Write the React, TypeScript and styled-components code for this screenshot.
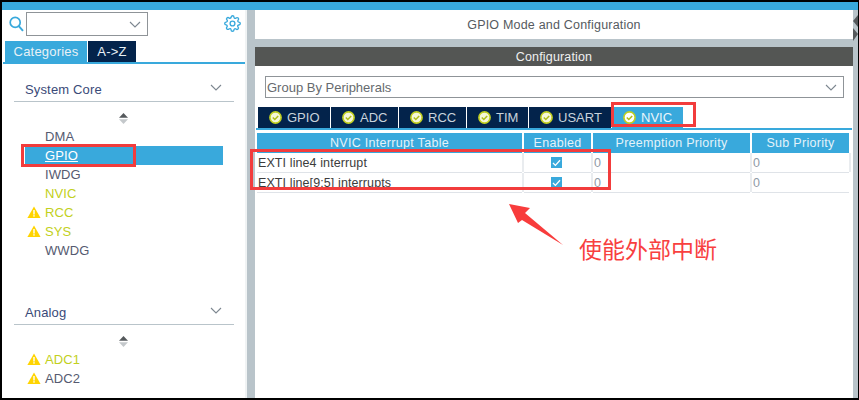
import React from 'react'
import styled, { createGlobalStyle } from 'styled-components'

const Global = createGlobalStyle`
html, body { margin: 0; padding: 0; background: #000; }
* { box-sizing: border-box; }
`

const Frame = styled.div`
width: 859px;
height: 400px;
overflow: hidden;
position: relative;
background: #b9c4ca;
border-top: 2px solid #000;
border-left: 2px solid #000;
border-right: 1px solid #000;
border-bottom: 2px solid #000;
font-family: "Liberation Sans", Arial, sans-serif;
display: flex;
flex-direction: column;
`

const TopBar = styled.div`
height: 8px;
flex: none;
background: #39a9dc;
`

const Body = styled.div`
flex: 1;
display: flex;
min-height: 0;
`

/* left column */
const Side = styled.div`
width: 245px;
flex: none;
background: #fff;
border-right: 2px solid #f0f3f4;
`

const SearchRow = styled.div`
display: flex;
align-items: center;
height: 28px;
padding: 0 0 0 7px;
`

const Combo = styled.div`
width: 122px;
height: 24px;
margin-left: 2px;
border: 1px solid #8f9498;
display: flex;
align-items: center;
justify-content: flex-end;
padding-right: 6px;
`

const GearWrap = styled.div`
margin-left: auto;
margin-right: 4px;
margin-bottom: 2px;
display: flex;
`

const SideTabs = styled.div`
display: flex;
gap: 1px;
height: 21px;
margin-top: 3px;
padding-left: 3px;
`

const SideTab = styled.div<{ $active?: boolean }>`
width: ${p => (p.$active ? '82px' : '48px')};
background: ${p => (p.$active ? '#39a9dc' : '#03234b')};
color: #e8f1f6;
font-size: 13px;
letter-spacing: 0.2px;
display: flex;
align-items: center;
justify-content: center;
`

const SideLine = styled.div`
height: 2px;
background: #39a9dc;
margin: 0 0 0 1px;
`

const Section = styled.div<{ $gap?: number }>`
margin: ${p => p.$gap || 0}px 11px 0 12px;
`

const SectionHead = styled.div`
height: 25px;
border-bottom: 1px solid #b9c4ca;
display: flex;
align-items: center;
justify-content: space-between;
padding: 0 12px 0 11px;
color: #3a4a78;
font-size: 13px;
letter-spacing: 0.15px;
svg { margin-bottom: 4px; }
`

const Sorter = styled.div`
height: 25px;
display: flex;
align-items: center;
justify-content: center;
padding-top: 7px;
`

const List = styled.div`
margin: 0 22px 0 23px;
`

const Item = styled.div<{ $sel?: boolean; $warn?: boolean }>`
height: 19px;
display: flex;
align-items: center;
font-size: 13px;
letter-spacing: 0.1px;
padding-left: 20px;
position: relative;
color: ${p => (p.$sel ? '#fff' : p.$warn ? '#c2d020' : '#555a70')};
background: ${p => (p.$sel ? '#39a9dc' : 'transparent')};
text-decoration: ${p => (p.$sel ? 'underline' : 'none')};
`

const WarnMark = styled.svg`
position: absolute;
left: 2px;
top: 3px;
`

/* right column */
const Main = styled.div`
flex: 1;
margin-left: 8px;
display: flex;
flex-direction: column;
min-width: 0;
`

const Title = styled.div`
height: 29px;
background: #fff;
margin-right: 5px;
display: flex;
align-items: center;
justify-content: center;
color: #555a60;
font-size: 12.5px;
letter-spacing: 0.2px;
`

const Panel = styled.div`
flex: 1;
margin-top: 8px;
margin-right: 5px;
background: #fff;
`

const PanelHead = styled.div`
height: 19px;
background: #545654;
color: #f0f0f0;
font-size: 12.5px;
letter-spacing: 0.15px;
display: flex;
align-items: center;
justify-content: center;
`

const GroupSelect = styled.div`
margin: 10px 9px 0 10px;
height: 22px;
border: 1px solid #8f9498;
padding: 0 6px 0 1px;
display: flex;
align-items: center;
justify-content: space-between;
color: #666a6e;
font-size: 13px;
`

const TabRow = styled.div`
display: flex;
gap: 1px;
margin: 9px 0 0 3px;
height: 21px;
`

const Tab = styled.div<{ $w: number; $active?: boolean }>`
width: ${p => p.$w}px;
background: ${p => (p.$active ? '#39a9dc' : '#03234b')};
color: ${p => (p.$active ? '#eaf6fb' : '#c9d3dc')};
font-size: 13px;
display: flex;
align-items: center;
gap: 5px;
padding-left: 11px;
`

const TabLine = styled.div`
height: 2px;
margin: 0 0 0 1px;
width: 596px;
background: #39a9dc;
`

const Table = styled.div`
margin: 3px 0 0 2px;
width: 595px;
display: grid;
grid-template-columns: 265px 67px 157px 97px;
column-gap: 2px;
`

const HeadCell = styled.div`
height: 20px;
background: #39a9dc;
color: #e4f3fa;
font-size: 12.5px;
letter-spacing: 0.3px;
display: flex;
align-items: center;
justify-content: center;
`

const Cell = styled.div<{ $center?: boolean; $muted?: boolean }>`
height: 20px;
position: relative;
border-bottom: 1px solid #dfe3e8;
padding-left: 1px;
display: flex;
align-items: center;
justify-content: ${p => (p.$center ? 'center' : 'flex-start')};
color: ${p => (p.$muted ? '#8f9aa6' : '#3c3c3c')};
font-size: 12.5px;
letter-spacing: 0.1px;
&:not(:last-child)::after {
  content: '';
  position: absolute;
  right: -2px;
  top: 0;
  bottom: 0;
  width: 2px;
  background: #e9ecef;
}
`

const Check = styled.div`
width: 11px;
height: 11px;
margin-right: 3px;
background: #39a9dc;
display: flex;
align-items: center;
justify-content: center;
`

const Strip = styled.div`
position: absolute;
right: 0;
top: 12px;
`

const RedBox = styled.div<{ $x: number; $y: number; $w: number; $h: number }>`
position: absolute;
left: ${p => p.$x}px;
top: ${p => p.$y}px;
width: ${p => p.$w}px;
height: ${p => p.$h}px;
border: 3px solid #f23c3c;
`

const Note = styled.div`
position: absolute;
left: 577px;
top: 231px;
color: #f8403f;
font-size: 23px;
line-height: 30px;
font-family: "Noto Sans CJK SC", sans-serif;
white-space: nowrap;
`

const ArrowMark = styled.svg`
position: absolute;
left: 507px;
top: 202px;
`

const Chevron = ({ color = '#7d8790' }: { color?: string }) => (
  <svg width="12" height="7" viewBox="0 0 12 7">
    <path d="M1 1l5 5 5-5" fill="none" stroke={color} strokeWidth="1.1" />
  </svg>
)

const Triangle = () => (
  <WarnMark width="14" height="12" viewBox="0 0 14 12">
    <path d="M7 0.5L13.6 12H0.4z" fill="#ffd400" />
    <rect x="6.3" y="4" width="1.4" height="4.5" fill="#fff" />
    <rect x="6.3" y="9.2" width="1.4" height="1.4" fill="#fff" />
  </WarnMark>
)

const SortArrows = () => (
  <svg width="9" height="11" viewBox="0 0 9 11">
    <path d="M4.5 0L9 4.8H0z" fill="#55595c" />
    <path d="M4.5 11L9 6.2H0z" fill="#c4c8cb" />
  </svg>
)

const TabIcon = ({ active }: { active?: boolean }) => (
  <svg width="13" height="13" viewBox="0 0 13 13">
    <circle cx="6.500" cy="6.500" r="5.600" fill={active ? '#fff' : '#f6f7d8'} stroke="#c2d020" strokeWidth="1.600" />
    <path d="M3.800 6.500l2 2 3.400-3.600" fill="none" stroke="#b0bd1a" strokeWidth="1.500" />
  </svg>
)

const CORE = [
  { name: 'DMA' },
  { name: 'GPIO', sel: true },
  { name: 'IWDG' },
  { name: 'NVIC', warn: true },
  { name: 'RCC', warn: true, icon: true },
  { name: 'SYS', warn: true, icon: true },
  { name: 'WWDG' },
]

const TABS = [
  { name: 'GPIO', w: 72 },
  { name: 'ADC', w: 67 },
  { name: 'RCC', w: 67 },
  { name: 'TIM', w: 61 },
  { name: 'USART', w: 82 },
  { name: 'NVIC', w: 71, active: true },
]

const ROWS = ['EXTI line4 interrupt', 'EXTI line[9:5] interrupts']

const App = () => (
  <Frame>
    <Global />
    <TopBar />
    <Body>
      <Side>
        <SearchRow>
          <svg width="15" height="16" viewBox="0 0 15 16">
            <circle cx="6.200" cy="6.400" r="5" fill="none" stroke="#39a9dc" strokeWidth="1.700" />
            <path d="M9.800 10.200l4.200 4.600" stroke="#39a9dc" strokeWidth="2" />
          </svg>
          <Combo>
            <Chevron />
          </Combo>
          <GearWrap>
            <svg width="17" height="17" viewBox="0 0 24 24" fill="none" stroke="#39a9dc" strokeWidth="1.900">
              <circle cx="12" cy="12" r="3.400" />
              <path d="M19.400 15a1.700 1.700 0 0 0 .3 1.800l.1.1a2 2 0 1 1-2.900 2.900l-.1-.1a1.700 1.700 0 0 0-2.800 1.200V21a2 2 0 1 1-4 0v-.1a1.700 1.700 0 0 0-2.900-1.200l-.1.1a2 2 0 1 1-2.900-2.900l.1-.1a1.700 1.700 0 0 0-1.200-2.800H3a2 2 0 1 1 0-4h.1a1.700 1.700 0 0 0 1.200-2.900l-.1-.1a2 2 0 1 1 2.900-2.900l.1.1a1.700 1.700 0 0 0 1.800.3h.1a1.700 1.700 0 0 0 1-1.500V3a2 2 0 1 1 4 0v.1a1.700 1.700 0 0 0 2.900 1.200l.1-.1a2 2 0 1 1 2.900 2.900l-.1.1a1.700 1.700 0 0 0-.3 1.800v.1a1.700 1.700 0 0 0 1.500 1H21a2 2 0 1 1 0 4h-.1a1.700 1.700 0 0 0-1.500 1z" />
            </svg>
          </GearWrap>
        </SearchRow>
        <SideTabs>
          <SideTab $active>Categories</SideTab>
          <SideTab>A-&gt;Z</SideTab>
        </SideTabs>
        <SideLine />

        <Section $gap={13}>
          <SectionHead>
            System Core
            <Chevron />
          </SectionHead>
        </Section>
        <Sorter>
          <SortArrows />
        </Sorter>
        <List>
          {CORE.map(i => (
            <Item key={i.name} $sel={i.sel} $warn={i.warn}>
              {i.icon && <Triangle />}
              {i.name}
            </Item>
          ))}
        </List>

        <Section $gap={40}>
          <SectionHead>
            Analog
            <Chevron />
          </SectionHead>
        </Section>
        <Sorter>
          <SortArrows />
        </Sorter>
        <List>
          <Item $warn>
            <Triangle />
            ADC1
          </Item>
          <Item>
            <Triangle />
            ADC2
          </Item>
        </List>
      </Side>

      <Main>
        <Title>GPIO Mode and Configuration</Title>
        <Panel>
          <PanelHead>Configuration</PanelHead>
          <GroupSelect>
            Group By Peripherals
            <Chevron />
          </GroupSelect>
          <TabRow>
            {TABS.map(t => (
              <Tab key={t.name} $w={t.w} $active={t.active}>
                <TabIcon active={t.active} />
                {t.name}
              </Tab>
            ))}
          </TabRow>
          <TabLine />
          <Table>
            <HeadCell>NVIC Interrupt Table</HeadCell>
            <HeadCell>Enabled</HeadCell>
            <HeadCell>Preemption Priority</HeadCell>
            <HeadCell>Sub Priority</HeadCell>
            {ROWS.map(r => (
              <React.Fragment key={r}>
                <Cell>{r}</Cell>
                <Cell $center>
                  <Check>
                    <svg width="9" height="8" viewBox="0 0 9 8">
                      <path d="M1 4l2.400 2.400L8 1.200" fill="none" stroke="#fff" strokeWidth="1.300" />
                    </svg>
                  </Check>
                </Cell>
                <Cell $muted>0</Cell>
                <Cell $muted>0</Cell>
              </React.Fragment>
            ))}
          </Table>
        </Panel>
      </Main>
    </Body>

    <Strip>
      <svg width="5" height="28" viewBox="0 0 5 28">
        <path d="M5 1L0 7l5 6z" fill="#55595c" />
        <path d="M0 14l5 6-5 7z" fill="#55595c" />
      </svg>
    </Strip>

    <RedBox $x={19} $y={142} $w={115} $h={23} />
    <RedBox $x={609} $y={100} $w={85} $h={25} />
    <RedBox $x={248} $y={147} $w={361} $h={41} />
    <ArrowMark width="56" height="44" viewBox="0 0 56 44">
      <path d="M0 0L21 4 16 9 54 41 13 16 9 19z" fill="#f83c3c" />
    </ArrowMark>
    <Note>使能外部中断</Note>
  </Frame>
)

export default App
